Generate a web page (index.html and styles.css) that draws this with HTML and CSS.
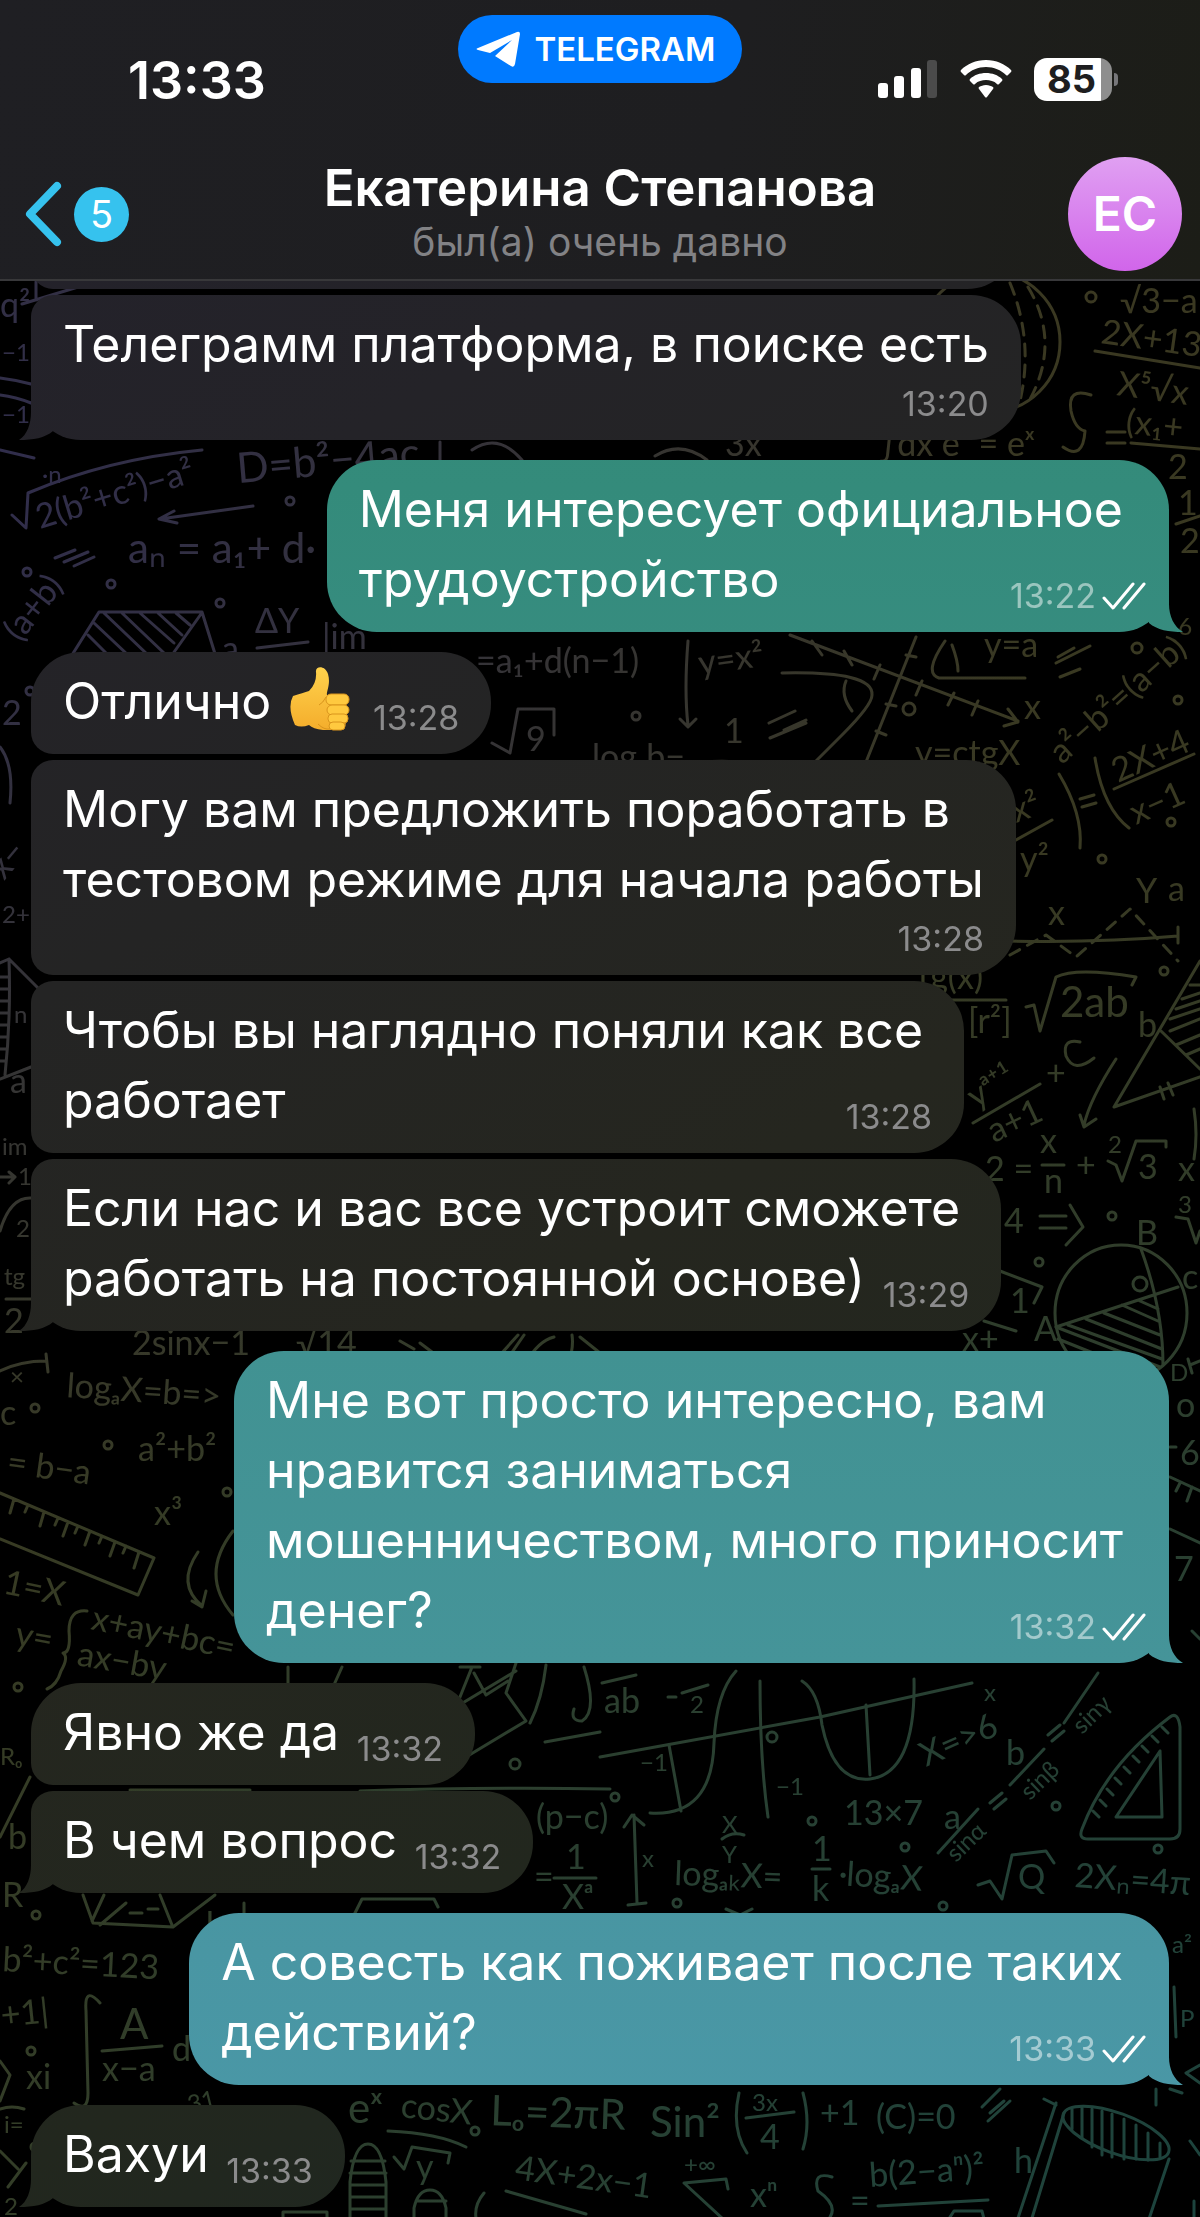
FILE: index.html
```html
<!DOCTYPE html>
<html lang="ru">
<head>
    <meta charset="utf-8">
    <meta name="viewport" content="width=device-width, initial-scale=1">
    <title>Екатерина Степанова</title>
    <link rel="stylesheet" href="styles.css">
</head>
<body>
<header class="header">
    <div class="status-bar">
        <div class="clock">13:33</div>
        <a class="app-pill" href="#">
            <svg class="plane" viewBox="0 0 44 36" aria-hidden="true"><path d="M2 17 41 1q3-1 3 2l-5 30q-1 4-4 2L19 25 36 9 14 22 2 19q-3-1 0-2z" fill="#fff"/></svg>
            TELEGRAM
        </a>
        <div class="indicators">
            <svg class="signal" viewBox="0 0 60 40" aria-hidden="true">
                <rect x="0" y="24" width="10" height="15" rx="3" fill="#fff"/>
                <rect x="16" y="17" width="10" height="22" rx="3" fill="#fff"/>
                <rect x="33" y="9" width="10" height="30" rx="3" fill="#fff"/>
                <rect x="49" y="1" width="10" height="38" rx="3" fill="#4b4b4b"/>
            </svg>
            <svg class="wifi" viewBox="0 0 52 38" aria-hidden="true" fill="#fff">
                <path d="M26 0C16 0 7 4 1 10q-1 1 0 2l3 3q1 1 2 0C11 10 18 7 26 7s15 3 20 8q1 1 2 0l3-3q1-1 0-2C45 4 36 0 26 0z"/>
                <path d="M26 13c-6 0-12 2-16 6q-1 1 0 2l3 3q1 1 2 0c3-3 7-4 11-4s8 1 11 4q1 1 2 0l3-3q1-1 0-2c-4-4-10-6-16-6z"/>
                <path d="M26 25c-3 0-5 1-7 2q-1 1 0 2l6 8q1 1 2 0l6-8q1-1 0-2c-2-1-4-2-7-2z"/>
            </svg>
            <div class="battery"><span class="level">85</span></div>
        </div>
    </div>
    <nav class="nav">
        <a class="back" href="#" aria-label="Назад">
            <svg class="chevron" viewBox="0 0 38 66" aria-hidden="true"><path d="M33 5 6 33l27 28" fill="none" stroke="#36c2ee" stroke-width="8" stroke-linecap="round" stroke-linejoin="round"/></svg>
            <span class="badge">5</span>
        </a>
        <div class="peer">
            <h1 class="name">Екатерина Степанова</h1>
            <p class="last-seen">был(а) очень давно</p>
        </div>
        <a class="avatar" href="#">ЕС</a>
    </nav>
</header>

<main class="chat">
    <svg class="wallpaper" viewBox="0 280 1200 1937" preserveAspectRatio="xMidYMin slice" aria-hidden="true">
        <!-- top left -->
        <g>
            <text x="0" y="316">q²</text>
            <path d="M22 303 78 286M36 281v18"/>
            <path d="M0 377q16 2 31 6M0 394q16 2 31 8"/>
            <text x="2" y="360" class="small">−1</text>
            <text x="2" y="422" class="small">−1</text>
            <path d="M0 449l34 8"/>
            <text x="42" y="482" class="small">·n</text>
            <path d="M12 514l14 13 2-35q80-34 174-43"/>
            <text x="40" y="528" transform="rotate(-17 40 528)">2(b²+c²)−a²</text>
            <text x="238" y="482" class="big" transform="rotate(-5 238 482)">D=b²−4ac</text>
            <path d="M253 505 160 518M174 510l-15 8 18 4"/>
            <text x="128" y="562" class="big">aₙ = a₁+ d·</text>
            <path d="M55 557l20-8M64 561l24-10M74 565l20-9"/>
            <text x="20" y="642" transform="rotate(-52 20 642)">(a+b)</text>
            <path d="M72 654l27-43h103l14 45M201 613l-29 41M94 622l34 32M88 634l20 20M104 612l44 42M122 612l42 40M140 612l34 30M158 612l24 22M176 612l14 12"/>
            <text x="255" y="632">ΔY</text><path d="M257 647l51-6"/>
            <text x="222" y="660">a</text>
            <text x="322" y="648">|im</text>
            <text x="476" y="672">=a₁+d(n−1)</text>
            <path d="M440 463v-22M472 449q26-18 50 10M655 455q26-16 52 4"/>
            <text x="725" y="455">3x</text>
            <circle cx="290" cy="500" r="4"/><circle cx="27" cy="571" r="4"/><circle cx="111" cy="583" r="4"/><circle cx="220" cy="602" r="4"/><circle cx="30" cy="690" r="4"/>
        </g>
        <!-- top right -->
        <g>
            <circle cx="990" cy="341" r="70"/>
            <path d="M1010 282q24 58 10 118M1028 286q34 56 0 116" stroke-dasharray="12 9"/>
            <circle cx="1091" cy="296" r="5"/>
            <text x="1120" y="312">√3−a</text>
            <text x="1100" y="342" transform="rotate(8 1100 342)">2X+13</text>
            <path d="M1095 350l105 17"/>
            <text x="1116" y="394" transform="rotate(8 1116 394)">X⁵√x</text>
            <text x="1125" y="432" transform="rotate(6 1125 432)">(x₁+</text>
            <path d="M1131 442l69 6M1107 431h18M1107 442h18"/>
            <text x="1168" y="478">2</text>
            <path d="M1091 394q-24-8-20 16 4 18 14 20-2 30-22 16"/>
            <text x="1088" y="480" class="small">x</text>
            <text x="880" y="455">∫dx eˣ = eˣ</text>
            <text x="1178" y="514">1</text><path d="M1176 523l24-8"/><text x="1180" y="552">2</text>
            <text x="1172" y="634" class="small">·6</text>
            <text x="984" y="656">y=a</text>
            <path d="M945 640q-22 32-6 37h86M952 644q6 16 6 26"/>
            <path d="M1058 656l16-9M1056 662l34-17M1060 676l20-8"/>
            <circle cx="1137" cy="647" r="5"/>
            <text x="1062" y="764" transform="rotate(-42 1062 764)">a²−b²=(a−b)</text>
            <text x="1118" y="782" transform="rotate(-24 1118 782)">2X+4</text>
            <path d="M1114 788l80-35M1095 757q8 50 34 70"/>
            <text x="1136" y="824" transform="rotate(-24 1136 824)">x−1</text>
            <path d="M1059 773q24 40 21 74M1080 798l14-4M1082 806l14-4"/>
            <circle cx="1178" cy="699" r="4"/><circle cx="1171" cy="821" r="4"/><circle cx="1102" cy="858" r="4"/>
            <text x="1016" y="822" transform="rotate(-20 1016 822)">x²</text>
            <path d="M1016 839l36-20"/><text x="1020" y="870">y²</text>
        </g>
        <!-- plot in the middle -->
        <g>
            <path d="M790 634l228 86M1008 708l10 13-14 4M916 636l-50 125M812 640l10 14M844 650l8 14M880 664l-6 14M922 680l-6 14M954 692l-6 12M978 700l-6 14M906 654l10 2M886 703l10 2M876 730l10 4"/>
            <path d="M782 672q92-2 90 22 0 10-30 40l-26 26M846 680q-6 14 6 30"/>
            <circle cx="909" cy="708" r="6"/>
            <text x="1024" y="718">x</text>
            <text x="915" y="764">y=ctgX</text>
            <path d="M688 640q-4 50 0 84M680 718l8 8 8-8"/>
            <text x="700" y="674" transform="rotate(-8 700 674)">y=x²</text>
            <text x="724" y="742">1</text>
            <path d="M769 722l26-12M784 729l22-10M770 737l36-15M702 761q30-2 60 2"/>
            <circle cx="636" cy="715" r="4"/>
            <text x="592" y="768">logₐb−</text>
            <path d="M492 742l18 10 8-44h36v26"/><text x="526" y="750">9</text>
        </g>
        <!-- right column -->
        <g>
            <text x="1136" y="902">Y</text><text x="1168" y="900">a</text><text x="1048" y="924">x</text>
            <path d="M1010 954l36-20 30 22 54-48 48 52" stroke-dasharray="11 9"/>
            <path d="M1008 940q90 2 170-5M1178 926v16"/>
            <text x="918" y="988">tg(x)</text><path d="M950 999h56"/><text x="968" y="1032">[r²]</text>
            <path d="M1026 1006l8-2 6 26 16-54q20-10 80 0l-4 8"/><text x="1060" y="1016" class="big">2ab</text>
            <circle cx="1164" cy="970" r="4"/>
            <text x="1138" y="1036">b</text>
            <path d="M1200 960l-86 146 86-30M1161 1030l39 38M1190 984h10M1182 998l18-6M1176 1008l24-8M1170 1018l30-10M1170 1030l30-12M1176 1044l24-10M1186 1054l14-6M1160 1086l4 12M1168 1082l5 12"/>
            <text x="976" y="1108" transform="rotate(-32 976 1108)">yᵃ⁺¹</text>
            <path d="M973 1122l67-39"/>
            <text x="994" y="1142" transform="rotate(-25 994 1142)">a+1</text>
            <text x="1046" y="1084">+</text>
            <path d="M1080 1041q-18-4-14 14 8 18 28 2M1116 1058q-26 40-32 66M1080 1114l4 12 12-8"/>
            <text x="985" y="1180">2 =</text><text x="1040" y="1152">x</text><path d="M1042 1164h22"/><text x="1044" y="1192">n</text>
            <text x="1076" y="1176">+</text><text x="1108" y="1152" class="small">2</text>
            <path d="M1108 1160l8 4 6 16 14-40h30v6"/><text x="1138" y="1178">3</text>
            <path d="M1194 1108q4 26 0 50"/><text x="1178" y="1180">x</text>
            <text x="1004" y="1232">4</text><path d="M1040 1215h26M1040 1227h26M1070 1204l13 22-17 18"/>
            <circle cx="1112" cy="1215" r="4"/><circle cx="1039" cy="1261" r="4"/>
            <text x="1178" y="1212" class="small">3</text><path d="M1176 1216l12 2 8 24 4-12"/>
            <text x="1136" y="1244">B</text><text x="1182" y="1288">c</text><text x="1034" y="1340">A</text><text x="1170" y="1380" class="small">D</text>
            <ellipse cx="1121" cy="1312" rx="66" ry="68"/><circle cx="1140" cy="1283" r="7"/>
            <path d="M1141 1248q22 60 22 116M1056 1326l122-40M1056 1326l104 40M1068 1324l94 34M1086 1318l76 30M1104 1312l56 22M1122 1304l36 16M1140 1300l18 8M1058 1338l40 16"/>
            <path d="M1000 1270l42 16-8 16M984 1320l32 10"/><text x="1010" y="1312">1</text>
            <text x="962" y="1350">x+</text>
            <path d="M1188 1358l4 14M1190 1364l10-4M1170 1446h6"/>
            <text x="1176" y="1416">o</text><text x="1180" y="1464">6</text>
            <path d="M1170 1476l30 14M1180 1482l-4 8M1192 1486l-5 14M1170 1528l30 14"/>
            <text x="1174" y="1580">7</text><path d="M1192 1630l8 8"/>
        </g>
        <!-- left edge -->
        <g>
            <path d="M0 746q14 18 10 56"/><text x="2" y="724">2</text>
            <text x="4" y="880" transform="rotate(-50 4 880)">x−</text>
            <text x="2" y="922" class="small">2+</text>
            <path d="M0 962l9-4 30 30M9 958q2 60-4 116M0 976h9M0 988h9M0 1000h9M0 1012h9M0 1024h8M0 1036h7M0 1048h7M0 1060h6M0 1078l31-12"/>
            <text x="14" y="1022" class="small">n</text><text x="10" y="1092">a</text><text x="2" y="1154" class="small">im</text>
            <path d="M0 1176h14M9 1171l6 5-6 6"/><text x="18" y="1184" class="small">1</text>
            <path d="M0 1230q10-34 31-33"/><text x="16" y="1236" class="small">2</text><text x="4" y="1284" class="small">tg</text><path d="M6 1298h25"/><text x="4" y="1332">2</text>
            <text x="132" y="1354">2sinx−1</text><text x="296" y="1354">√14</text>
            <path d="M400 1340l14 8M420 1342l24 18M500 1354l18-20M506 1360l18-26M526 1362q12-22 28-26M572 1334q2 14-4 28M580 1336l20 16"/>
            <path d="M0 1370q20-10 46-10M46 1353l2 18"/><text x="10" y="1384" class="small">×</text><text x="0" y="1424">c</text>
            <text x="66" y="1396" transform="rotate(4 66 1396)">logₐX=b=&gt;</text>
            <circle cx="35" cy="1407" r="4"/><circle cx="108" cy="1444" r="4"/><circle cx="227" cy="1491" r="4"/><circle cx="18" cy="1686" r="4"/>
            <text x="138" y="1460">a²+b²</text>
            <text x="6" y="1472" transform="rotate(8 6 1472)">= b−a</text>
            <text x="154" y="1524">x³</text>
            <path d="M0 1492l154 65-16 37L0 1538M14 1498l-4 14M28 1504l-3 7M44 1511l-4 14M58 1517l-3 7M68 1521l-5 14M78 1525l-3 7M90 1530l-5 14M102 1535l-3 7M115 1541l-5 14M126 1545l-3 7M139 1551l-5 16"/>
            <path d="M198 1551q-22 32 4 54M192 1600l10 6 4-16M233 1530q-34 44 0 84"/>
            <text x="2" y="1592" transform="rotate(12 2 1592)">1=X</text>
            <text x="14" y="1644" transform="rotate(10 14 1644)">y=</text>
            <path d="M87 1610q-18-2-18 20 2 22-6 22 6 4-2 18-4 14-14 18"/>
            <text x="90" y="1628" transform="rotate(12 90 1628)">x+ay+bc=</text>
            <text x="76" y="1664" transform="rotate(10 76 1664)">ax−by</text>
        </g>
        <!-- between the replies -->
        <g>
            <path d="M288 1666v20M342 1666l-9 20M460 1666h20M472 1666l-16 40 60-36M516 1662l-10 30 20 28-60 36M546 1664q-4 34-16 58M584 1666q14 44-2 54-12 0-8-12M474 1672l12 22 22-14"/>
            <path d="M545 1741l55-10M360 1790q120-4 250-2"/>
            <circle cx="515" cy="1763" r="5"/><circle cx="615" cy="1796" r="4"/>
            <text x="604" y="1712">ab</text><path d="M602 1682l34-8M668 1696h8M682 1692l26-8"/><text x="690" y="1712" class="small">2</text>
            <path d="M600 1756l220-40 152-34"/>
            <path d="M650 1812q62 4 64-70 2-50 22-72M802 1680q16 10 20 44 12 58 48 54 46-6 44-100M760 1680q0 80 8 136M669 1744l12 66M866 1704l4 70"/>
            <text x="640" y="1770" class="small">−1</text><text x="776" y="1794" class="small">−1</text><circle cx="772" cy="1736" r="5"/>
            <text x="722" y="1832" class="small">X</text><path d="M722 1838q10-8 22-4"/><text x="722" y="1862" class="small">Y</text>
            <text x="926" y="1766" transform="rotate(-24 926 1766)">X=&gt;6</text>
            <text x="844" y="1824">13×7</text>
            <circle cx="812" cy="1820" r="4"/><circle cx="905" cy="1846" r="4"/><circle cx="1056" cy="1805" r="4"/><circle cx="943" cy="1905" r="4"/><circle cx="677" cy="1902" r="4"/><circle cx="1158" cy="1848" r="4"/>
            <text x="944" y="1828">a</text><path d="M938 1852l40-44"/><text x="956" y="1862" transform="rotate(-44 956 1862)" class="small">sinα</text>
            <path d="M990 1802l12-10M994 1808l12-10M1048 1734l12-10M1052 1740l12-10"/>
            <text x="1006" y="1764">b</text><path d="M1010 1784l34-36"/><text x="1030" y="1800" transform="rotate(-44 1030 1800)" class="small">sinβ</text>
            <path d="M1064 1722l34-50"/><text x="1082" y="1734" transform="rotate(-44 1082 1734)" class="small">sinγ</text>
            <text x="984" y="1700" class="small">x</text>
            <path d="M1170 1716q8-6 10 10v102q0 10-10 10h-82q-10 0-6-10 24-64 88-112zM1160 1750l-44 66h46l-2-66M1162 1726l6 6M1152 1735l6 6M1142 1745l6 6M1133 1755l6 6M1124 1766l6 6M1115 1777l6 6M1107 1788l6 6M1100 1799l6 6M1093 1810l6 6"/>
            <path d="M634 1814l3 88M624 1826l8-12 12 10M628 1904l18-2"/><text x="642" y="1866" class="small">x</text>
            <text x="674" y="1884" transform="rotate(2 674 1884)">logₐₖX=</text>
            <text x="812" y="1860">1</text><path d="M812 1868h18"/><text x="812" y="1900">k</text>
            <text x="838" y="1884" transform="rotate(4 838 1884)">·logₐX</text>
            <path d="M978 1884l12-4 12 18 10-44 34-4 8 12"/><text x="1018" y="1888">Q</text>
            <text x="1074" y="1886" transform="rotate(4 1074 1886)">2Xₙ=4π</text>
            <text x="536" y="1828">(p−c)</text><text x="534" y="1888">=</text><text x="566" y="1868">1</text><path d="M554 1877h42"/><text x="562" y="1908">Xᵃ</text>
            <path d="M354 1914l8-16h72l4 8M726 1908l14 6 12-6"/>
            <text x="0" y="1764" class="small">Rₒ</text><path d="M0 1836l30-60"/><text x="8" y="1848">b</text><text x="2" y="1906">R</text>
            <path d="M130 1789h120M83 1894l10 28 80 4 42-32M104 1894l-12 26M160 1894l12 30M100 1924l26-22M130 1912h12M148 1908h10M244 1902v20"/>
            <text x="206" y="1936">b</text><circle cx="36" cy="1914" r="4"/>
        </g>
        <!-- bottom -->
        <g>
            <text x="2" y="1970" transform="rotate(3 2 1970)">b²+c²=123</text>
            <text x="2" y="2026" transform="rotate(-6 2 2026)">+1|</text>
            <path d="M100 2002q-16-18-14 8l2 82q0 20-14 10M102 2050l60-5"/>
            <text x="120" y="2038" class="big">A</text><text x="102" y="2080">x−a</text><text x="172" y="2060">d</text>
            <circle cx="31" cy="2050" r="4"/><circle cx="35" cy="2146" r="4"/>
            <text x="26" y="2088">xi</text><path d="M0 2060l10 14-10 26M0 2108q12-4 24 0"/>
            <text x="4" y="2132" class="small">i=</text><text x="190" y="2112" transform="rotate(-14 190 2112)" class="small">31</text>
            <path d="M0 2150l18 18M8 2186l18-24"/><text x="4" y="2214" class="small">2</text>
            <text x="348" y="2122" class="big">eˣ</text><text x="400" y="2116" transform="rotate(6 400 2116)">cosX</text>
            <path d="M388 2130q50 2 78 16M394 2156l10 12 8-22 38 6-2 10"/><text x="416" y="2178">y</text>
            <text x="490" y="2124" transform="rotate(2 490 2124)" class="big">Lₒ=2πR</text>
            <text x="650" y="2136" class="big">Sin²</text>
            <path d="M739 2092q-8 36 8 60M803 2092q8 30 0 56M746 2117l48-6"/><text x="752" y="2110" class="small">3x</text><text x="760" y="2148">4</text>
            <text x="820" y="2124">+1</text><text x="876" y="2128">(C)=0</text>
            <path d="M982 2106l18-18M990 2112l14-12M988 2120l22-20"/>
            <text x="514" y="2178" transform="rotate(8 514 2178)">4X+2x−1</text>
            <path d="M506 2190l80 23"/><circle cx="475" cy="2130" r="4"/><path d="M484 2192q-10 12-8 25"/>
            <text x="684" y="2172" class="small">+∞</text><path d="M728 2188l-2-10-42 4 38 35"/>
            <text x="750" y="2206">xⁿ</text><path d="M832 2176q-20-6-14 14 20 14 12 26"/><text x="850" y="2212">=</text>
            <text x="870" y="2186" transform="rotate(-4 870 2186)">b(2−aⁿ)²</text><path d="M878 2205l110-6M950 2216l4-6h28l2 8"/>
            <text x="1014" y="2172">h</text>
            <path d="M1056 2102l-38 115M1044 2098l12 6M1064 2112l-32 105M1169 2158l-20 60"/>
            <ellipse cx="1116" cy="2132" rx="56" ry="20" transform="rotate(20 1116 2132)"/>
            <path d="M1072 2108v20M1082 2107v30M1092 2108v38M1102 2110v44M1112 2113v43M1124 2118v40M1136 2124v34M1148 2132v27M1160 2142v14"/>
            <path d="M350 2217v-36q4-38 18-38t18 38v36M351 2160h34M350 2172h36M350 2184h36M350 2196h36M350 2208h36M414 2217v-10q4-18 16-18t16 18v10M416 2200h30M283 2217v-6h44v6"/>
            <text x="1172" y="1952" class="small">a²</text><path d="M1174 1986l2 50"/><text x="1180" y="2026" class="small">P</text><path d="M1156 2088v16M1170 2088l12 4M1190 2140l10 14M1194 2200v17M1200 2064l-14 8 14 10"/>
        </g>
    </svg>

    <div class="messages">
        <div class="bubble in joined previous"></div>
        <div class="bubble in joined-top tail">
            <p class="text">Телеграмм платформа, в поиске есть</p>
            <div class="meta below"><time>13:20</time></div>
        </div>

        <div class="bubble out tail first">
            <p class="text">Меня интересует официальное<br>трудоустройство</p>
            <div class="meta"><time>13:22</time><svg class="checks" viewBox="0 0 44 28" aria-hidden="true"><path d="M2 16l9 10L31 2M22 26 42 2"/></svg></div>
        </div>

        <div class="bubble in joined-bottom first">
            <p class="text">Отлично
                <svg class="thumb" viewBox="0 0 60 64" role="img" aria-label="👍">
                    <defs>
                        <linearGradient id="skin" x1="0" y1="0" x2="0" y2="1"><stop offset="0" stop-color="#ffd24c"/><stop offset="1" stop-color="#f4ad2c"/></linearGradient>
                    </defs>
                    <path d="M3 29q10-3 16-5 8-8 7-19c-1-6 9-7 12 2 3 10-2 18-1 21l14-1q8 2 5 10v18q0 8-10 8H33q-10-1-14-5-8 3-14 0-8-18-2-29z" fill="url(#skin)"/>
                    <g fill="#ffc93f" stroke="#d9941c" stroke-width="1">
                        <rect x="36" y="27" width="23" height="11" rx="5"/>
                        <rect x="37" y="38" width="22" height="10" rx="5"/>
                        <rect x="38" y="47" width="20" height="9" rx="4"/>
                        <rect x="39" y="55" width="16" height="8" rx="4"/>
                    </g>
                    <path d="M28 57q6 6 12 5M36 30q-3 6-7 8" fill="none" stroke="#d9941c" stroke-width="1"/>
                </svg><span class="room"></span></p>
            <div class="meta"><time>13:28</time></div>
        </div>
        <div class="bubble in joined">
            <p class="text">Могу вам предложить поработать в<br>тестовом режиме для начала работы</p>
            <div class="meta below"><time>13:28</time></div>
        </div>
        <div class="bubble in joined">
            <p class="text side">Чтобы вы наглядно поняли как все<br>работает</p>
            <div class="meta"><time>13:28</time></div>
        </div>
        <div class="bubble in joined-top tail">
            <p class="text side">Если нас и вас все устроит сможете<br>работать на постоянной основе)</p>
            <div class="meta"><time>13:29</time></div>
        </div>

        <div class="bubble out tail first">
            <p class="text">Мне вот просто интересно, вам<br>нравится заниматься<br>мошенничеством, много приносит<br>денег?</p>
            <div class="meta"><time>13:32</time><svg class="checks" viewBox="0 0 44 28" aria-hidden="true"><path d="M2 16l9 10L31 2M22 26 42 2"/></svg></div>
        </div>

        <div class="bubble in joined-bottom first">
            <p class="text">Явно же да<span class="room"></span></p>
            <div class="meta"><time>13:32</time></div>
        </div>
        <div class="bubble in joined-top tail">
            <p class="text">В чем вопрос<span class="room"></span></p>
            <div class="meta"><time>13:32</time></div>
        </div>

        <div class="bubble out tail first">
            <p class="text">А совесть как поживает после таких<br>действий?</p>
            <div class="meta"><time>13:33</time><svg class="checks" viewBox="0 0 44 28" aria-hidden="true"><path d="M2 16l9 10L31 2M22 26 42 2"/></svg></div>
        </div>

        <div class="bubble in tail first">
            <p class="text">Вахуи<span class="room"></span></p>
            <div class="meta"><time>13:33</time></div>
        </div>
    </div>
</main>
</body>
</html>
```
FILE: styles.css
```css
* {
    box-sizing: border-box;
}
body {
    margin: 0;
    min-height: 100vh;
    display: flex;
    flex-direction: column;
    background: #000;
    color: #fff;
    font-family: Inter, "Liberation Sans", sans-serif;
}
a {
    color: inherit;
    text-decoration: none;
}

/* header */
.header {
    position: relative;
    z-index: 2;
    padding-bottom: 8px;
    background: linear-gradient(100deg, #1f1f23 0%, #1e1e20 60%, #1c1d17 100%);
    border-bottom: 2px solid #38383a;
}
.status-bar {
    display: grid;
    grid-template-columns: 1fr auto 1fr;
    height: 157px;
    padding: 15px 88px 0;
}
.clock {
    padding: 34px 0 0 40px;
    font-size: 52px;
    line-height: 64px;
    font-weight: 600;
}
.app-pill {
    display: flex;
    align-items: center;
    justify-content: center;
    gap: 14px;
    height: 68px;
    padding: 0 26px 0 18px;
    border-radius: 34px;
    background: #007aff;
    font-size: 33px;
    font-weight: 600;
}
.plane {
    width: 44px;
    height: 36px;
}
.indicators {
    display: flex;
    justify-content: flex-end;
    align-items: center;
    gap: 22px;
    height: 128px;
}
.signal {
    width: 60px;
    height: 40px;
}
.wifi {
    width: 52px;
    height: 38px;
}
.battery {
    position: relative;
    width: 78px;
    height: 43px;
    border-radius: 13px;
    background: linear-gradient(90deg, #fff 67px, #8e8e8e 67px);
    color: #1e1e20;
    font-size: 38px;
    line-height: 43px;
    font-weight: 700;
    text-align: center;
}
.level {
    padding-right: 3px;
}
.battery::after {
    content: "";
    position: absolute;
    top: 15px;
    right: -6px;
    width: 4px;
    height: 13px;
    border-radius: 0 4px 4px 0;
    background: #77777a;
}
.nav {
    display: grid;
    grid-template-columns: 1fr auto 1fr;
    align-items: center;
    padding: 0 18px;
}
.back {
    display: flex;
    align-items: center;
    gap: 12px;
    padding-left: 6px;
}
.chevron {
    width: 38px;
    height: 66px;
}
.badge {
    width: 55px;
    height: 55px;
    border-radius: 50%;
    background: #36c2ee;
    font-size: 38px;
    line-height: 55px;
    text-align: center;
}
.peer {
    padding-bottom: 6px;
    text-align: center;
}
.name {
    margin: 0;
    font-size: 51px;
    line-height: 62px;
    font-weight: 600;
}
.last-seen {
    margin: 0;
    color: #828285;
    font-size: 39px;
    line-height: 46px;
}
.avatar {
    justify-self: end;
    width: 114px;
    height: 114px;
    border-radius: 50%;
    background: linear-gradient(#e0a0f2, #d165ea);
    font-size: 48px;
    line-height: 114px;
    font-weight: 600;
    text-align: center;
}

/* chat */
.chat {
    position: relative;
    flex: 1;
    isolation: isolate;
    overflow: hidden;
    background:
        radial-gradient(circle at 0% 10%, #302d4c 0%, rgba(48, 45, 76, 0) 50%),
        radial-gradient(circle at 100% 100%, #1c443e 0%, rgba(28, 68, 62, 0) 60%),
        linear-gradient(#3a3821, #363c24);
}
/* white ink, tinted by the gradients behind it */
.wallpaper {
    position: absolute;
    inset: 0;
    width: 100%;
    height: 100%;
    background: #000;
    mix-blend-mode: multiply;
}
.wallpaper path,
.wallpaper circle,
.wallpaper ellipse {
    fill: none;
    stroke: #fff;
    stroke-width: 3;
    stroke-linecap: round;
    stroke-linejoin: round;
}
.wallpaper text {
    fill: #fff;
    font-family: Lato, sans-serif;
    font-size: 34px;
}
.wallpaper .big {
    font-size: 42px;
}
.wallpaper .small {
    font-size: 24px;
}
.messages {
    position: relative;
    display: flex;
    flex-direction: column;
    align-items: flex-start;
    gap: 6px;
    padding: 0 31px 6px;
}

/* bubbles */
.bubble {
    position: relative;
    display: grid;
    padding: 14px 32px 18px 32px;
    border-radius: 50px;
}
.bubble.first {
    margin-top: 14px;
}
.bubble.previous {
    width: 986px;
    height: 102px;
    margin-top: -94px;
}
.in,
.in::after {
    background: linear-gradient(150deg, #23212c 0%, #242328 22%, #242424 35%, #25261f 55%, #22271e 75%, #1c2724 100%) fixed;
}
.out {
    align-self: flex-end;
    padding-right: 23px;
}
.out,
.out::after {
    background: linear-gradient(#2f8872 0%, #348b7b 22%, #419292 61%, #459499 75%, #4996a3 88%, #4a98a8 100%) fixed;
}
.joined-top {
    border-top-left-radius: 22px;
}
.joined-bottom {
    border-bottom-left-radius: 22px;
}
.joined {
    border-top-left-radius: 22px;
    border-bottom-left-radius: 22px;
}
.tail::after {
    content: "";
    position: absolute;
    bottom: 0;
    width: 60px;
    height: 50px;
}
.in.tail::after {
    left: -13px;
    clip-path: path("M13 0V22C13 34 9 45 1 50C15 50 27 48 35 41V0Z");
}
.out.tail::after {
    right: -15px;
    clip-path: path("M45 0V22C45 34 50 45 59 50C45 50 33 48 25 41V0Z");
}
.text,
.meta {
    grid-area: 1 / 1;
}
.text {
    z-index: 1;
    margin: 0;
    font-size: 50px;
    line-height: 70px;
}
.out .text {
    padding-right: 23px;
}
.text.side {
    padding-right: 9px;
}
/* keeps the end of the last line clear for the time */
.room {
    display: inline-block;
    width: 104px;
}
.meta {
    z-index: 1;
    display: flex;
    align-self: end;
    justify-self: end;
    align-items: center;
    gap: 6px;
    color: #8b8b8c;
    font-size: 34px;
    line-height: 36px;
}
.meta.below {
    grid-area: 2 / 1;
    margin-top: 7px;
}
.out .meta {
    color: rgba(255, 255, 255, 0.5);
}
.checks {
    width: 44px;
    height: 28px;
    fill: none;
    stroke: #fff;
    stroke-width: 3;
    stroke-linecap: round;
    stroke-linejoin: round;
}
.thumb {
    width: 60px;
    height: 64px;
    margin: 0 5px;
    vertical-align: -12px;
}
```
